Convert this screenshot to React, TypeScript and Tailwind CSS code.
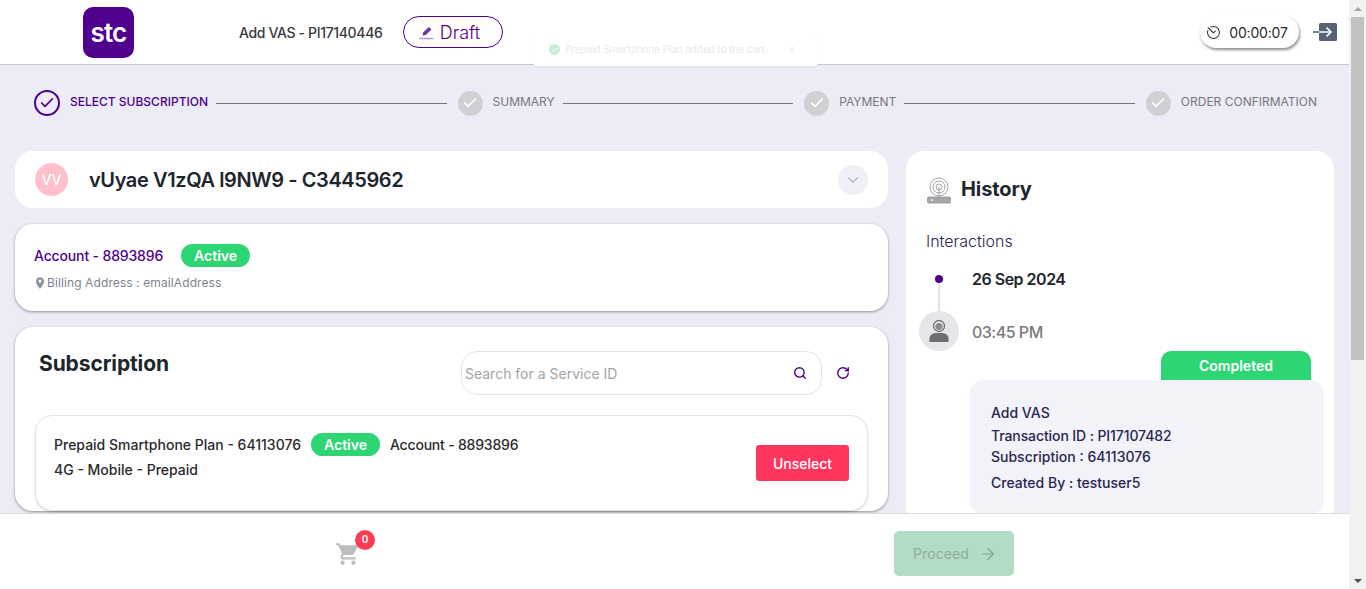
import React from 'react'
import { ArrowRight, Check, ChevronDown, RotateCw, Search, X } from 'lucide-react'
import { MdLocationOn, MdShoppingCart } from 'react-icons/md'

const steps = [
  { label: 'SELECT SUBSCRIPTION', active: true },
  { label: 'SUMMARY', active: false },
  { label: 'PAYMENT', active: false },
  { label: 'ORDER CONFIRMATION', active: false },
]

function ActiveBadge() {
  return (
    <span className="inline-flex h-[23px] w-[69px] items-center justify-center rounded-full bg-[#2ed573] text-[14px] font-semibold text-white">
      Active
    </span>
  )
}

function Header() {
  return (
    <header className="relative flex h-[65px] shrink-0 items-center border-b border-[#c8c9cc] bg-white pl-[83px] pr-[12px]">
      <div className="flex h-[51px] w-[51px] items-center justify-center rounded-[10px] bg-[#4f008c] pt-[1px] text-[26px] font-semibold tracking-[-0.8px] text-white">
        stc
      </div>
      <span className="ml-[105px] text-[14px] font-medium tracking-[-0.35px] text-[#3a3a3c]">Add VAS - PI17140446</span>
      <div className="ml-[21px] flex h-[32px] w-[100px] items-center justify-center gap-[6px] rounded-full border border-[#4f008c] pr-[8px] text-[#4f008c]">
        <svg width="15" height="15" viewBox="0 0 15 15" fill="none">
          <path d="M3.5 10.5 L4.2 7.6 L9.8 2 L12.5 4.6 L6.8 10 Z" fill="#6f35a5" />
          <path d="M0.5 13.5 H14.5" stroke="#b89ad2" strokeWidth="1.6" />
        </svg>
        <span className="text-[18px] font-light">Draft</span>
      </div>
      <div className="ml-auto flex items-center gap-[14px]">
        <div className="flex h-[32px] w-[99px] items-center justify-center gap-[8px] rounded-full bg-white pr-[5px] shadow-[1px_2px_3px_rgba(0,0,0,0.45)]">
          <svg width="15" height="15" viewBox="0 0 15 15" fill="none" stroke="#3a3a3c" strokeWidth="1.1">
            <path d="M4.6 2.2 A6 6 0 1 1 1.9 5.2" />
            <path d="M1.8 2.4 L7.5 8 M7.5 8 L9.6 5.6" />
          </svg>
          <span className="text-[14px] tracking-[-0.2px] text-[#2a2a2c]">00:00:07</span>
        </div>
        <svg width="24" height="20" viewBox="0 0 24 20" fill="none">
          <rect x="6" y="1" width="18" height="18" rx="1.5" fill="#566176" />
          <path d="M0 10 H6" stroke="#566176" strokeWidth="1.6" />
          <path d="M6 10 H18 M13.5 5.5 L18 10 L13.5 14.5" stroke="#fff" strokeWidth="1.6" />
        </svg>
      </div>
      {/* toast fading out over the header */}
      <div className="absolute left-[533px] top-[33px] flex h-[33px] w-[285px] items-center rounded-sm bg-white pl-[16px] shadow-[0_1px_2px_rgba(46,213,115,0.1)]">
        <span className="flex h-[11px] w-[11px] items-center justify-center rounded-full bg-[#c4efd6]">
          <Check size={8} strokeWidth={3} color="#fff" />
        </span>
        <span className="ml-[5px] text-[10px] tracking-[-0.1px] text-[#e9eaec]">Prepaid Smartphone Plan added to the cart.</span>
        <X size={9} className="ml-[20px] text-[#d6d7da]" />
      </div>
    </header>
  )
}

function Stepper() {
  return (
    <div className="flex h-[76px] shrink-0 items-center pl-[34px] pr-[32px]">
      {steps.map((step, idx) => (
        <React.Fragment key={step.label}>
          {step.active ? (
            <span className="flex h-[26px] w-[26px] shrink-0 items-center justify-center rounded-full border-2 border-[#4f008c]">
              <Check size={16} strokeWidth={2.6} color="#4f008c" />
            </span>
          ) : (
            <span className="flex h-[25px] w-[25px] shrink-0 items-center justify-center rounded-full bg-[#cfd0d3]">
              <Check size={16} strokeWidth={2.6} color="#fff" />
            </span>
          )}
          <span
            className={
              step.active
                ? 'ml-[10px] -mt-[2px] whitespace-nowrap text-[12px] font-medium text-[#4f008c]'
                : 'ml-[10px] -mt-[2px] whitespace-nowrap text-[12px] text-[#77777a]'
            }
          >
            {step.label}
          </span>
          {idx < steps.length - 1 && <span className="ml-[8px] mr-[11px] h-px flex-1 bg-[#77777a]" />}
        </React.Fragment>
      ))}
    </div>
  )
}

function LeftColumn() {
  return (
    <div className="flex w-[873px] shrink-0 flex-col gap-[16px]">
      <div className="flex h-[57px] items-center rounded-[18px] bg-white pl-[20px] pr-[20px]">
        <span className="flex h-[33px] w-[33px] items-center justify-center rounded-full bg-[#ffc0cb] text-[14px] font-medium text-white">
          VV
        </span>
        <span className="ml-[21px] pt-[1px] text-[20px] font-semibold tracking-[-0.4px] text-[#1d252d]">
          vUyae V1zQA l9NW9 - C3445962
        </span>
        <span className="ml-auto flex h-[30px] w-[30px] items-center justify-center rounded-full bg-[#eef0f6]">
          <ChevronDown size={18} strokeWidth={1.2} color="#77808c" />
        </span>
      </div>

      <div className="h-[87px] rounded-[18px] bg-white pl-[19px] pt-[19px] shadow-[0_1px_3px_rgba(0,0,0,0.4)]">
        <div className="flex items-center">
          <span className="text-[14px] font-medium tracking-[-0.15px] text-[#4f008c]">Account - 8893896</span>
          <span className="ml-[18px]">
            <ActiveBadge />
          </span>
        </div>
        <div className="mt-[7px] flex items-center text-[12px] tracking-[0.1px] text-[#7c8490]">
          <MdLocationOn size={14} color="#8a94a4" className="-ml-[1px]" />
          <span>Billing Address : emailAddress</span>
        </div>
      </div>

      <div className="rounded-[18px] bg-white px-[20px] pt-[24px] shadow-[0_1px_3px_rgba(0,0,0,0.4)]">
        <div className="flex items-start">
          <h2 className="pl-[4px] text-[21px] font-bold leading-[26px] tracking-[-0.1px] text-[#1d252d]">Subscription</h2>
          <div className="ml-[292px] flex h-[44px] w-[361px] items-center rounded-[16px] border border-[#e3e3ea] pl-[3px] pr-[14px]">
            <span className="text-[14px] text-[#a3a3a8]">Search for a Service ID</span>
            <Search size={14} strokeWidth={2.4} color="#4f008c" className="ml-auto" />
          </div>
          <RotateCw size={14} strokeWidth={2.4} color="#4f008c" className="ml-[14px] mt-[15px]" />
        </div>
        <div className="mt-[20px] flex h-[96px] rounded-[18px] border border-[#e3e3ea] pl-[18px] pr-[18px] pt-[17px] shadow-[0_1px_2px_rgba(0,0,0,0.2)]">
          <div>
            <div className="flex items-center text-[14px] font-medium text-[#2a2a2c]">
              <span>Prepaid Smartphone Plan - 64113076</span>
              <span className="ml-[10px]">
                <ActiveBadge />
              </span>
              <span className="ml-[10px] tracking-[-0.2px]">Account - 8893896</span>
            </div>
            <div className="mt-[3px] text-[14px] font-medium text-[#2a2a2c]">4G - Mobile - Prepaid</div>
          </div>
          <button className="ml-auto mt-[12px] h-[36px] w-[93px] rounded-[3px] bg-[#ff375e] text-[14px] font-medium text-white">
            Unselect
          </button>
        </div>
      </div>
    </div>
  )
}

function HistoryPanel() {
  return (
    <div className="ml-[18px] w-[428px] shrink-0 rounded-t-[18px] bg-white pt-[26px]">
      <div className="flex items-center pl-[21px]">
        <svg width="24" height="27" viewBox="0 0 24 27" fill="none" stroke="#9a9a9e" strokeWidth="0.9">
          <circle cx="12" cy="10" r="9" />
          <circle cx="12" cy="10" r="6" />
          <circle cx="12" cy="10" r="3" />
          <path d="M12 10 V20" />
          <rect x="0.5" y="20" width="23" height="6" rx="1" fill="#a6a6aa" />
          <circle cx="5" cy="23" r="1" fill="#fff" stroke="none" />
        </svg>
        <h2 className="ml-[10px] -mt-[3px] text-[20px] font-bold tracking-[-0.1px] text-[#1d252d]">History</h2>
      </div>
      <div className="mt-[25px] pl-[20px] text-[16px] font-light text-[#2a2550]">Interactions</div>

      <div className="mt-[15px] flex pl-[13px]">
        <div className="flex w-[40px] flex-col items-center">
          <span className="mt-[7px] h-[8px] w-[8px] rounded-full bg-[#4f008c]" />
          <span className="h-[28px] w-[2px] bg-[#e2e2e8]" />
          <span className="flex h-[40px] w-[40px] items-center justify-center rounded-full bg-[#e6e6ea]">
            <svg width="20" height="24" viewBox="0 0 20 24" fill="#6d6d70">
              <circle cx="10" cy="7" r="5.5" fill="none" stroke="#6d6d70" strokeWidth="1.3" />
              <circle cx="10" cy="7.5" r="3.6" fill="#8a8a8d" />
              <path d="M0.5 23 V19 Q1 15 6 14 H14 Q19 15 19.5 19 V23 Z" />
            </svg>
          </span>
        </div>
        <div className="ml-[13px]">
          <div className="text-[16px] font-semibold leading-[22px] tracking-[-0.5px] text-[#1d252d]">26 Sep 2024</div>
          <div className="mt-[31px] text-[16px] font-medium leading-[22px] tracking-[-0.5px] text-[#7a7a7d]">03:45 PM</div>
        </div>
      </div>

      <div className="ml-[255px] flex h-[29px] w-[150px] items-center justify-center rounded-t-[10px] bg-[#2ed573] text-[14px] font-semibold text-white">
        Completed
      </div>
      <div className="ml-[64px] h-[134px] w-[354px] rounded-[14px] bg-[#f1f3f9] pl-[21px] pt-[22px] text-[14px] font-medium text-[#2a2550]">
        <div className="leading-[21px]">Add VAS</div>
        <div className="mt-[2px] leading-[21px] tracking-[-0.1px]">Transaction ID : PI17107482</div>
        <div className="leading-[21px]">Subscription : 64113076</div>
        <div className="mt-[5px] leading-[21px]">Created By : testuser5</div>
      </div>
    </div>
  )
}

function Footer() {
  return (
    <footer className="flex h-[76px] shrink-0 items-center border-t border-[#dcdcdf] bg-white pl-[335px]">
      <div className="relative mt-[4px] h-[26px] w-[26px]">
        <MdShoppingCart size={26} color="#bdbdbd" />
        <span className="absolute -right-[14px] -top-[11px] flex h-[20px] w-[20px] items-center justify-center rounded-full bg-[#ff3b55] text-[10px] font-semibold text-white">
          0
        </span>
      </div>
      <button className="ml-[533px] mt-[4px] flex h-[45px] w-[120px] items-center justify-center gap-[10px] rounded-[5px] bg-[#b2dcc6] pl-[2px] text-[14px] tracking-[0.1px] text-[#8fae9d]">
        <span>Proceed</span>
        <ArrowRight size={18} strokeWidth={1.6} color="#83a191" />
      </button>
    </footer>
  )
}

function Scrollbar() {
  return (
    <div className="flex w-[17px] shrink-0 flex-col items-center bg-[#f1f1f1]">
      <div className="flex h-[17px] items-center justify-center">
        <span className="h-0 w-0 border-x-[4px] border-b-[4px] border-x-transparent border-b-[#a3a3a3]" />
      </div>
      <div className="h-[343px] w-[13px] bg-[#c1c1c1]" />
      <div className="mt-auto flex h-[17px] items-center justify-center">
        <span className="h-0 w-0 border-x-[4px] border-t-[4px] border-x-transparent border-t-[#505050]" />
      </div>
    </div>
  )
}

export default function App() {
  return (
    <div className="flex h-[589px] w-[1366px] overflow-hidden font-['Inter',sans-serif]">
      <div className="flex w-[1349px] shrink-0 flex-col">
        <Header />
        <main className="flex min-h-0 flex-1 flex-col overflow-hidden bg-[#ebecf5]">
          <Stepper />
          <div className="mt-[10px] flex shrink-0 pl-[15px]">
            <LeftColumn />
            <HistoryPanel />
          </div>
        </main>
        <Footer />
      </div>
      <Scrollbar />
    </div>
  )
}
